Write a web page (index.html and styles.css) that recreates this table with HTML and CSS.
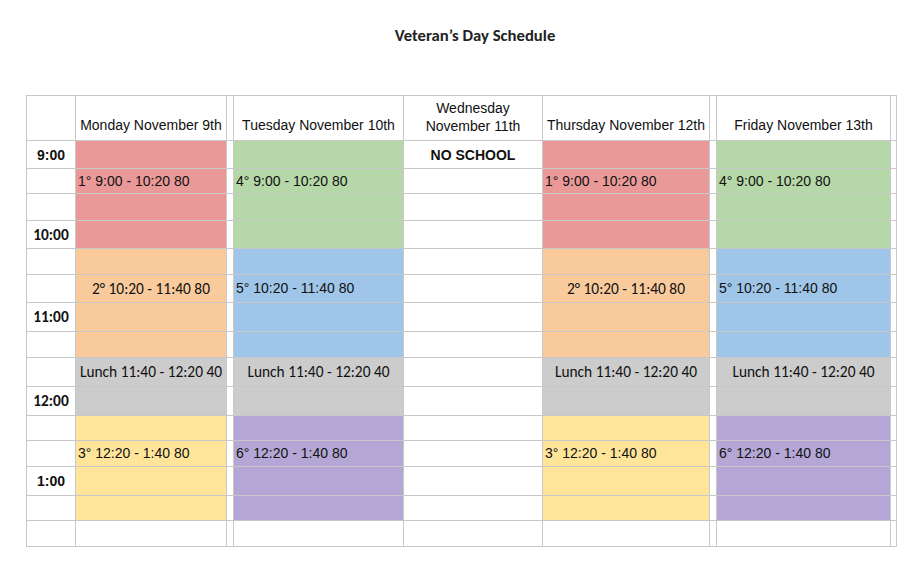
FILE: index.html
```html
<!DOCTYPE html>
<html>
<head>
<meta charset="utf-8">
<link rel="stylesheet" href="styles.css">
</head>
<body>
<div class="page">
  <h1 class="title">Veteran’s Day Schedule</h1>
  <div class="sheet">
    <!-- header -->
    <div class="c hd"></div>
    <div class="c hd">Monday November 9th</div>
    <div class="c"></div>
    <div class="c hd">Tuesday November 10th</div>
    <div class="c hd wed">Wednesday<br>November 11th</div>
    <div class="c hd">Thursday November 12th</div>
    <div class="c"></div>
    <div class="c hd">Friday November 13th</div>
    <div class="c"></div>
    <!-- r1 -->
    <div class="c tm">9:00</div>
    <div class="c red"></div><div class="c"></div>
    <div class="c green"></div>
    <div class="c ns">NO SCHOOL</div>
    <div class="c red"></div><div class="c"></div>
    <div class="c green"></div><div class="c"></div>
    <!-- r2 -->
    <div class="c"></div>
    <div class="c red tx">1° 9:00 - 10:20 80</div><div class="c"></div>
    <div class="c green tx">4° 9:00 - 10:20 80</div>
    <div class="c"></div>
    <div class="c red tx">1° 9:00 - 10:20 80</div><div class="c"></div>
    <div class="c green tx">4° 9:00 - 10:20 80</div><div class="c"></div>
    <!-- r3 -->
    <div class="c"></div>
    <div class="c red"></div><div class="c"></div>
    <div class="c green"></div>
    <div class="c"></div>
    <div class="c red"></div><div class="c"></div>
    <div class="c green"></div><div class="c"></div>
    <!-- r4 -->
    <div class="c tm cal">10:00</div>
    <div class="c red"></div><div class="c"></div>
    <div class="c green"></div>
    <div class="c"></div>
    <div class="c red"></div><div class="c"></div>
    <div class="c green"></div><div class="c"></div>
    <!-- r5 -->
    <div class="c"></div>
    <div class="c orange"></div><div class="c"></div>
    <div class="c blue"></div>
    <div class="c"></div>
    <div class="c orange"></div><div class="c"></div>
    <div class="c blue"></div><div class="c"></div>
    <!-- r6 -->
    <div class="c"></div>
    <div class="c orange ctx">2° 10:20 - 11:40 80</div><div class="c"></div>
    <div class="c blue tx">5° 10:20 - 11:40 80</div>
    <div class="c"></div>
    <div class="c orange ctx">2° 10:20 - 11:40 80</div><div class="c"></div>
    <div class="c blue tx">5° 10:20 - 11:40 80</div><div class="c"></div>
    <!-- r7 -->
    <div class="c tm cal">11:00</div>
    <div class="c orange"></div><div class="c"></div>
    <div class="c blue"></div>
    <div class="c"></div>
    <div class="c orange"></div><div class="c"></div>
    <div class="c blue"></div><div class="c"></div>
    <!-- r8 -->
    <div class="c"></div>
    <div class="c orange"></div><div class="c"></div>
    <div class="c blue"></div>
    <div class="c"></div>
    <div class="c orange"></div><div class="c"></div>
    <div class="c blue"></div><div class="c"></div>
    <!-- r9 -->
    <div class="c"></div>
    <div class="c gray ctx">Lunch 11:40 - 12:20 40</div><div class="c"></div>
    <div class="c gray ctx">Lunch 11:40 - 12:20 40</div>
    <div class="c"></div>
    <div class="c gray ctx">Lunch 11:40 - 12:20 40</div><div class="c"></div>
    <div class="c gray ctx">Lunch 11:40 - 12:20 40</div><div class="c"></div>
    <!-- r10 -->
    <div class="c tm cal">12:00</div>
    <div class="c gray"></div><div class="c"></div>
    <div class="c gray"></div>
    <div class="c"></div>
    <div class="c gray"></div><div class="c"></div>
    <div class="c gray"></div><div class="c"></div>
    <!-- r11 -->
    <div class="c"></div>
    <div class="c yellow"></div><div class="c"></div>
    <div class="c purple"></div>
    <div class="c"></div>
    <div class="c yellow"></div><div class="c"></div>
    <div class="c purple"></div><div class="c"></div>
    <!-- r12 -->
    <div class="c"></div>
    <div class="c yellow tx">3° 12:20 - 1:40 80</div><div class="c"></div>
    <div class="c purple tx">6° 12:20 - 1:40 80</div>
    <div class="c"></div>
    <div class="c yellow tx">3° 12:20 - 1:40 80</div><div class="c"></div>
    <div class="c purple tx">6° 12:20 - 1:40 80</div><div class="c"></div>
    <!-- r13 -->
    <div class="c tm">1:00</div>
    <div class="c yellow"></div><div class="c"></div>
    <div class="c purple"></div>
    <div class="c"></div>
    <div class="c yellow"></div><div class="c"></div>
    <div class="c purple"></div><div class="c"></div>
    <!-- r14 -->
    <div class="c"></div>
    <div class="c yellow"></div><div class="c"></div>
    <div class="c purple"></div>
    <div class="c"></div>
    <div class="c yellow"></div><div class="c"></div>
    <div class="c purple"></div><div class="c"></div>
    <!-- r15 -->
    <div class="c"></div><div class="c"></div><div class="c"></div>
    <div class="c"></div><div class="c"></div><div class="c"></div>
    <div class="c"></div><div class="c"></div><div class="c"></div>
  </div>
</div>
</body>
</html>
```
FILE: styles.css
```css
html, body {
  margin: 0;
  padding: 0;
  background: #ffffff;
}
.page {
  width: 924px;
  height: 567px;
  padding: 25px 0 0 26px;
  box-sizing: border-box;
  font-family: "Liberation Sans", Arial, sans-serif;
  color: #111;
}
.title {
  margin: 0;
  width: 871px;
  text-align: center;
  font-family: Carlito, Lato, "Liberation Sans", sans-serif;
  font-weight: bold;
  font-size: 16.7px;
  line-height: 20px;
  color: #222;
  height: 70px;
  padding-left: 27px;
  box-sizing: border-box;
}
.sheet {
  display: grid;
  width: 871px;
  grid-template-columns: 48px 150px 6px 169px 138px 166px 6px 173px 5px;
  grid-template-rows: 44px 27px 24px 26px 27px 25px 27px 28px 25px 28px 28px 24px 25px 28px 24px 25px;
  gap: 1px;
  padding: 1px;
  box-sizing: border-box;
  background: #c8c8c8;
}
.c {
  background: #ffffff;
  font-size: 14px;
  line-height: 16px;
  display: flex;
  align-items: center;
  white-space: nowrap;
  overflow: hidden;
}
.hd {
  align-items: flex-end;
  justify-content: center;
  text-align: center;
  line-height: 18px;
  padding-bottom: 6px;
}
.wed {
  padding-bottom: 5px;
}
.tm {
  justify-content: center;
  font-weight: bold;
}
.ns {
  justify-content: center;
  font-weight: bold;
}
.cal {
  font-family: Carlito, Lato, "Liberation Sans", sans-serif;
  font-size: 15.4px;
}
.tx {
  padding-left: 2px;
  padding-bottom: 1px;
}
.ctx {
  justify-content: center;
  font-family: Carlito, Lato, "Liberation Sans", sans-serif;
  font-size: 15.4px;
}
.red { background: #ea9999; }
.green { background: #b6d7a8; }
.orange { background: #f9cb9c; }
.blue { background: #9fc5e8; }
.gray { background: #cccccc; }
.yellow { background: #ffe599; }
.purple { background: #b4a7d6; }
```
